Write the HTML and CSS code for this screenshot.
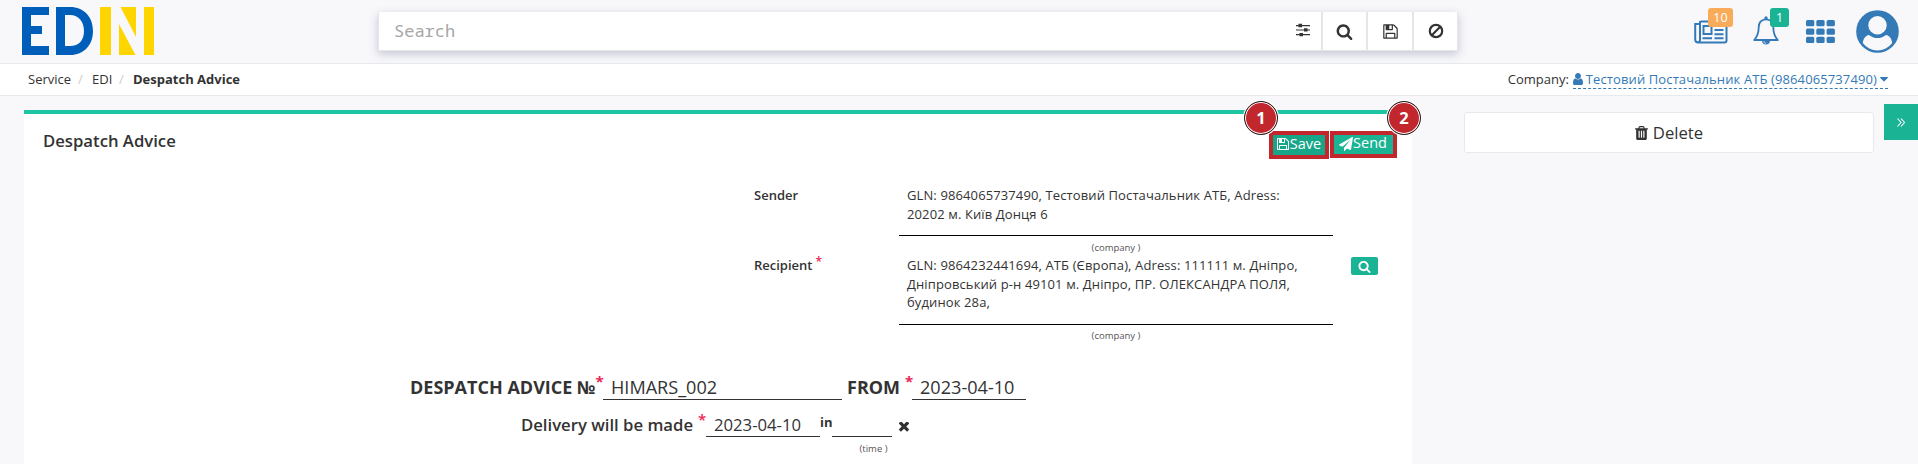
FILE: index.html
```html
<!DOCTYPE html>
<html lang="en">
<head>
<meta charset="utf-8">
<title>Despatch Advice</title>
<link rel="stylesheet" href="styles.css">
</head>
<body>
<svg width="0" height="0" class="defs">
  <symbol id="search" viewBox="0 0 1792 1792"><path d="M1216 832q0-185-131.5-316.5t-316.5-131.5-316.5 131.5-131.5 316.5 131.5 316.5 316.5 131.5 316.5-131.5 131.5-316.5zm512 832q0 52-38 90t-90 38q-54 0-90-38l-343-342q-179 124-399 124-143 0-273.5-55.5t-225-150-150-225-55.5-273.5 55.5-273.5 150-225 225-150 273.5-55.5 273.5 55.5 225 150 150 225 55.5 273.5q0 220-124 399l343 343q37 37 37 90z"/></symbol>
  <symbol id="floppy" viewBox="0 0 1792 1792"><path d="M512 1536h768v-384h-768v384zm896 0h128v-896q0-14-10-38.5t-20-34.5l-281-281q-10-10-34-20t-39-10v416q0 40-28 68t-68 28h-576q-40 0-68-28t-28-68v-416h-128v1280h128v-416q0-40 28-68t68-28h832q40 0 68 28t28 68v416zm-384-928v-320q0-13-9.5-22.5t-22.5-9.5h-192q-13 0-22.5 9.5t-9.5 22.5v320q0 13 9.5 22.5t22.5 9.5h192q13 0 22.5-9.5t9.5-22.5zm640 32v928q0 40-28 68t-68 28h-1344q-40 0-68-28t-28-68v-1344q0-40 28-68t68-28h928q40 0 88 20t76 48l280 280q28 28 48 76t20 88z"/></symbol>
</svg>

<header class="topbar">
  <svg class="logo" viewBox="0 0 132 48" role="img" aria-label="EDIN">
    <path fill="#005ebb" d="M0 0h27v8H9v11h11v8H9v12h18v9H0z"/>
    <path fill="#005ebb" fill-rule="evenodd" d="M34 0h14c14 0 23 10 23 24s-9 24-23 24H34zM43 8v31h5c9 0 14-6 14-15S57 8 48 8z"/>
    <path fill="#ffd500" d="M78 0h11v48H78zM122 0h10v48h-10zM98.500 0h15.500v30zM97 17l16.500 31H97z"/>
  </svg>
  <div class="searchbar">
    <span class="placeholder">Search</span>
    <span class="tool tool-filter"><svg width="14" height="14" viewBox="0 0 14 14" fill="#333"><path d="M0 2h14v1.200H0zM0 6.400h14v1.200H0zM0 11h14v1.200H0z"/><path d="M2.500.800h3.500v3.400H2.500zM8 5.200h3.500v3.400H8zM3.500 9.900H7v3.400H3.500z"/></svg></span>
    <span class="tool"><svg width="17" height="17"><use href="#search"/></svg></span>
    <span class="tool"><svg width="17" height="17"><use href="#floppy"/></svg></span>
    <span class="tool"><svg width="16" height="16" viewBox="0 0 16 16" fill="none" stroke="#333" stroke-width="2.200"><circle cx="8" cy="8" r="6.200"/><path d="M12.200 3.800l-8.400 8.400"/></svg></span>
  </div>
  <nav class="actions">
    <a class="act news">
      <svg width="34" height="24" viewBox="0 0 34 24" fill="none" stroke="#337ab7" stroke-width="2"><path d="M6.500 1.500h24a2 2 0 0 1 2 2v17a2 2 0 0 1-2 2H4.200a3 3 0 0 1-3-3V4h4.500M6 1v19a2.300 2.300 0 0 1-2.300 2.300M9.500 6h8v8h-8zM20.500 6h9M20.500 10h9M20.500 14.200h9M8.500 18.300h9.500M20.500 18.300h9"/></svg>
      <span class="badge orange">10</span>
    </a>
    <a class="act bell">
      <svg width="26" height="29" viewBox="0 0 26 29"><path fill="none" stroke="#337ab7" stroke-width="1.800" stroke-linejoin="round" d="M13 3.300c5 0 7.300 3.700 7.300 8 0 6 1.400 9.400 4.500 12.700H1.200c3.100-3.300 4.500-6.700 4.500-12.700 0-4.300 2.300-8 7.300-8z"/><path fill="#337ab7" d="M11.400 1.800a1.600 1.600 0 0 1 3.200 0V4h-3.200zM9 24.500h8a4 4 0 0 1-8 0z"/><path d="M13.200 27.300a2.400 2.400 0 0 1-2.500-2.300" fill="none" stroke="#f8f8fb" stroke-width=".7"/></svg>
      <span class="badge green">1</span>
    </a>
    <a class="act grid">
      <svg width="29" height="23" viewBox="0 0 29 23" fill="#337ab7"><rect width="8.300" height="6.300" rx="1.500"/><rect x="10.300" width="8.300" height="6.300" rx="1.500"/><rect x="20.600" width="8.300" height="6.300" rx="1.500"/><rect y="8.400" width="8.300" height="6.300" rx="1.500"/><rect x="10.300" y="8.400" width="8.300" height="6.300" rx="1.500"/><rect x="20.600" y="8.400" width="8.300" height="6.300" rx="1.500"/><rect y="16.800" width="8.300" height="6.200" rx="1.500"/><rect x="10.300" y="16.800" width="8.300" height="6.200" rx="1.500"/><rect x="20.600" y="16.800" width="8.300" height="6.200" rx="1.500"/></svg>
    </a>
    <a class="act avatar">
      <svg width="43" height="43" viewBox="0 0 43 43"><circle cx="21.500" cy="21.500" r="21.300" fill="#337ab7"/><path fill="#f8f8fb" d="M13 25c2.400 2.100 5.300 3.100 8.500 3.100s6.100-1 8.500-3.100c3.800.6 5.700 4 6.200 8A18.300 18.300 0 0 1 6.800 33c.5-4 2.400-7.400 6.200-8z"/><circle cx="21.500" cy="15.300" r="9.200" fill="#f8f8fb"/></svg>
    </a>
  </nav>
</header>

<div class="crumbs">
  <span class="c1">Service</span><span class="sep s1">/</span><span class="c2">EDI</span><span class="sep s2">/</span><strong>Despatch Advice</strong>
  <div class="company">
    <span>Company:</span>
    <a class="company-link"><svg width="10" height="12" viewBox="256 128 1280 1536" preserveAspectRatio="none"><path fill="#337ab7" d="M1536 1399q0 109-62.500 187t-150.500 78h-854q-88 0-150.500-78t-62.500-187q0-85 8.500-160.500t31.500-152 58.500-131 94-89 134.500-34.500q131 128 313 128t313-128q76 0 134.500 34.500t94 89 58.500 131 31.500 152 8.500 160.500zm-256-887q0 159-112.500 271.500t-271.500 112.500-271.500-112.500-112.500-271.500 112.500-271.500 271.500-112.500 271.500 112.500 112.500 271.500z"/></svg><span class="cname">Тестовий Постачальник АТБ (9864065737490)</span><svg width="8" height="5" viewBox="0 0 8 5"><path fill="#337ab7" d="M.3 0h7.400q.5.400 0 .900L4.400 4.300q-.4.400-.8 0L.3.900Q-.2.400.3 0z"/></svg></a>
  </div>
</div>

<main class="content">
  <section class="panel">
    <div class="panel-head">
      <h1>Despatch Advice</h1>
      <div class="buttons">
        <div class="mark save"><span class="num">1</span><button class="btn"><svg width="14" height="14"><use href="#floppy"/></svg>Save</button></div>
        <div class="mark send"><span class="num">2</span><button class="btn"><svg width="14" height="14" viewBox="0 0 1792 1792"><path d="M1764 11q33 24 27 64l-256 1536q-5 29-32 45-14 8-31 8-11 0-24-5l-453-185-242 295q-18 23-49 23-13 0-22-4-19-7-30.500-23.500t-11.500-36.500v-349l864-1059-1069 925-395-162q-37-14-40-55-2-40 32-59l1664-960q15-9 32-9 20 0 36 11z"/></svg>Send</button></div>
      </div>
    </div>
    <div class="party sender">
      <label>Sender</label>
      <div class="field"><p>GLN: 9864065737490, Тестовий Постачальник АТБ, Adress:<br>20202 м. Київ Донця 6</p><small>(company )</small></div>
    </div>
    <div class="party recipient">
      <label>Recipient<sup>*</sup></label>
      <div class="field"><p>GLN: 9864232441694, АТБ (Європа), Adress: 111111 м. Дніпро,<br>Дніпровський р-н 49101 м. Дніпро, ПР. ОЛЕКСАНДРА ПОЛЯ,<br>будинок 28а,</p><small>(company )</small></div>
      <button class="find"><svg width="13" height="13"><use href="#search"/></svg></button>
    </div>
    <div class="line doc">
      <b class="doc-no">DESPATCH ADVICE №<sup>*</sup></b><span class="input num-in">HIMARS_002</span>
      <b class="from">FROM<sup>*</sup></b><span class="input date-in">2023-04-10</span>
    </div>
    <div class="line delivery">
      <b class="made">Delivery will be made<sup>*</sup></b><span class="input date-in">2023-04-10</span><b class="in">in</b>
      <span class="time"><span class="input time-in"></span><small>(time )</small></span>
      <svg class="clear" width="10" height="10" viewBox="302 474 1188 1100"><path d="M1490 1322q0 40-28 68l-136 136q-28 28-68 28t-68-28l-294-294-294 294q-28 28-68 28t-68-28l-136-136q-28-28-28-68t28-68l294-294-294-294q-28-28-28-68t28-68l136-136q28-28 68-28t68 28l294 294 294-294q28-28 68-28t68 28l136 136q28 28 28 68t-28 68l-294 294 294 294q28 28 28 68z"/></svg>
    </div>
  </section>
  <aside class="side">
    <button class="delete"><svg width="13" height="14" viewBox="192 128 1408 1536" preserveAspectRatio="none"><path d="M704 1376v-704q0-14-9-23t-23-9h-64q-14 0-23 9t-9 23v704q0 14 9 23t23 9h64q14 0 23-9t9-23zm256 0v-704q0-14-9-23t-23-9h-64q-14 0-23 9t-9 23v704q0 14 9 23t23 9h64q14 0 23-9t9-23zm256 0v-704q0-14-9-23t-23-9h-64q-14 0-23 9t-9 23v704q0 14 9 23t23 9h64q14 0 23-9t9-23zm-544-992h448l-48-117q-7-9-17-11h-317q-10 2-17 11zm928 32v64q0 14-9 23t-23 9h-96v948q0 83-47 143.500t-113 60.500h-832q-66 0-113-58.500t-47-141.500v-952h-96q-14 0-23-9t-9-23v-64q0-14 9-23t23-9h309l70-167q15-37 54-63t79-26h320q40 0 79 26t54 63l70 167h309q14 0 23 9t9 23z"/></svg>Delete</button>
    <button class="toggle"><svg width="8" height="9" viewBox="0 0 8 9" fill="none" stroke="#fff" stroke-width="1.100"><path d="M.5.500l3.500 4-3.500 4M4 .500l3.500 4-3.500 4"/></svg></button>
  </aside>
</main>
</body>
</html>
```
FILE: styles.css
```css
* { box-sizing: border-box; }
body {
  margin: 0;
  height: 464px;
  overflow: hidden;
  background: #f8f8fb;
  color: #333;
  font: 13px/18.57px "Open Sans", "Noto Sans", sans-serif;
}
svg { display: block; flex: none; }
.defs { position: absolute; }
button { border: 0; padding: 0; margin: 0; font: inherit; color: inherit; display: flex; align-items: center; justify-content: center; }
b, label { font-weight: 600; }

.topbar { height: 64px; border-bottom: 1px solid #e7eaec; display: flex; align-items: flex-start; padding-left: 22px; }
.logo { width: 132px; height: 48px; margin-top: 7px; }
.searchbar {
  display: flex;
  width: 1080px;
  height: 39px;
  margin: 12px 0 0 224px;
  background: #fff;
  border: solid #e5e6e7;
  border-width: 0 1px 1px;
  box-shadow: 0 3px 9px rgba(60, 65, 110, .28);
}
.placeholder { flex: 1; padding-left: 15px; font: 17px/37px "Noto Sans Mono", "DejaVu Sans Mono", monospace; color: #a6a6a6; }
.tool { width: 45.500px; display: flex; align-items: center; justify-content: center; border-left: 2px solid #e5e6e7; fill: #333; }
.tool-filter { width: 36px; border-left: 0; padding-bottom: 2px; }
.tool:nth-child(n+4) { padding-left: 2px; }
.actions { display: flex; align-items: flex-start; margin-left: 236px; }
.act { position: relative; display: block; }
.news { margin-top: 20px; }
.bell { margin: 16px 0 0 25px; }
.grid { margin: 20px 0 0 27px; }
.avatar { margin: 10px 0 0 21px; }
.badge { position: absolute; height: 19px; border-radius: 3px; color: #fff; font-size: 12.500px; font-weight: 500; line-height: 19px; text-align: center; }
.orange { left: 14px; top: -12px; width: 25px; background: #f8ac59; }
.green { left: 17px; top: -8px; width: 19px; background: #1ab394; }

.crumbs { height: 32px; background: #fff; border-bottom: 1px solid #e7eaec; display: flex; padding: 6px 30px 0 28px; }
.c1 { width: 50px; }
.c2 { width: 27px; }
.sep { color: #ccc; }
.s1 { width: 14px; }
.s2 { width: 14px; }
.crumbs strong { font-weight: 700; }
.company { display: flex; gap: 4px; margin-left: auto; }
.company-link { display: flex; align-items: center; gap: 3px; color: #337ab7; height: 19px; border-bottom: 1px dashed #337ab7; }
.cname { letter-spacing: .11px; }

.content { display: flex; padding: 14px 0 0 24px; }
.panel { width: 1388px; height: 354px; background: #fff; border-top: 4px solid #1dc5a3; }
.panel-head { display: flex; justify-content: space-between; height: 72px; padding: 17px 15px 0 19px; }
h1 { margin: 0; font-size: 16.700px; line-height: 20px; font-weight: 600; }
.buttons { display: flex; gap: 1px; align-items: flex-start; }
.mark { position: relative; border: 4px solid #c1272d; background: #1ab394; }
.save { width: 60px; height: 28px; }
.send { width: 67px; height: 27px; }
.btn { width: 100%; height: 100%; padding: 0 1px 2px 0; background: #18a689; color: #fff; fill: #fff; font-size: 14.500px; }
.send .btn { background: #1ab394; }
.num {
  position: absolute;
  top: -34px;
  width: 34px;
  height: 34px;
  border: 1px solid #222;
  border-radius: 50%;
  background: #c1272d;
  box-shadow: inset 0 0 0 1px #fff, 0 0 0 1px #fff;
  color: #fff;
  font-size: 16.500px;
  font-weight: 700;
  line-height: 32px;
  text-align: center;
}
.save .num { left: -29px; }
.send .num { left: 53px; }

.party { display: flex; padding-left: 730px; }
.party label { width: 145px; }
.field { width: 434px; }
.field p { margin: 0; padding-left: 8px; border-bottom: 1px solid #000; letter-spacing: .115px; }
small { display: block; text-align: center; font-size: 9.500px; line-height: 14px; color: #555; }
.sender { height: 70px; }
.sender p { height: 50px; }
.field small { padding-top: 5px; }
.recipient { height: 115px; }
.recipient p { height: 69px; }
.recipient small { padding-top: 4px; }
.find { width: 27px; height: 18px; margin: 1px 0 0 18px; border-radius: 2px; background: #1ab394; fill: #fff; }
sup { color: #ed2553; font-size: 12px; line-height: 0; vertical-align: 4px; margin-left: 3px; font-weight: 600; }

.line { display: flex; align-items: flex-start; }
.input { display: block; padding-left: 8px; border-bottom: 1px solid #333; }
.doc { height: 37px; padding-left: 386px; font-size: 18.100px; line-height: 32px; }
.doc b { font-size: 18px; font-weight: 700; white-space: nowrap; }
.doc .input { height: 29px; }
.doc sup { font-size: 15px; font-weight: 700; margin-left: 0; vertical-align: 7px; }
.doc-no { width: 193px; }
.num-in { width: 239px; }
.from { width: 70px; padding-left: 5px; }
.doc .from sup { margin-left: 5px; }
.date-in { width: 114px; }
.delivery { padding-left: 497px; font-size: 16.700px; line-height: 34px; }
.made { width: 185px; white-space: nowrap; }
.made sup { font-size: 15px; margin-left: 5px; vertical-align: 6px; }
.delivery .input { height: 29px; }
.line .in { width: 12px; font-size: 13px; line-height: 29px; font-weight: 700; }
.time-in { width: 60px; }
.time small { padding-top: 5px; padding-left: 23px; }
.clear { margin: 14px 0 0 7px; fill: #333; }

.side { display: flex; align-items: flex-start; flex: 1; }
.delete { width: 410px; height: 41px; margin: 2px 0 0 52px; padding-top: 1px; gap: 5px; background: #fff; border: 1px solid #e7eaec; border-radius: 3px; font-size: 16.700px; fill: #333; }
.toggle { width: 34px; height: 36px; margin: -6px 0 0 auto; background: #1ab394; }
```
